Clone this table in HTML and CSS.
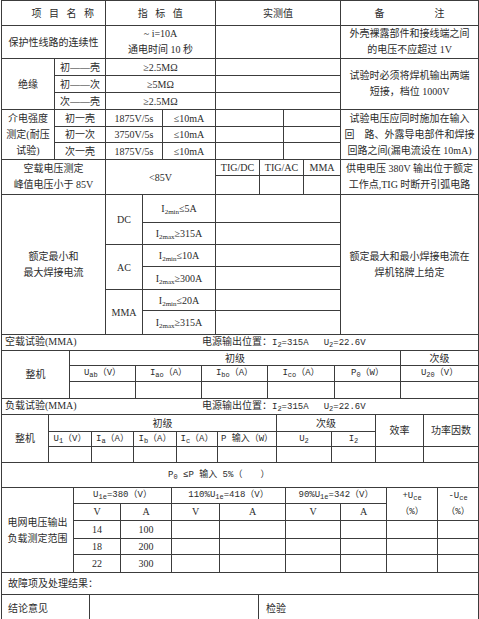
FILE: index.html
```html
<!DOCTYPE html>
<html lang="zh">
<head>
<meta charset="utf-8">
<link rel="stylesheet" href="styles.css">
</head>
<body>
<div class="sheet">

<table class="t">
<colgroup><col class="a1"><col class="a2"><col class="a3"><col class="a4"><col class="a5"><col class="a6"><col class="a7"><col class="a8"><col class="a9"><col class="a10"></colgroup>
<tr class="r25"><td colspan="2" class="sp sp-l">项目名称</td><td colspan="3" class="sp sp-m">指标值</td><td colspan="4">实测值</td><td>备<span class="gap"></span>注</td></tr>
<tr class="r31"><td colspan="2">保护性线路的连续性</td><td colspan="3" class="rm">~ i=10A<br>通电时间 10 秒</td><td colspan="4"></td><td class="rm">外壳裸露部件和接线端之间<br>的电压不应超过 1V</td></tr>
<tr class="r17"><td rowspan="3">绝缘</td><td>初——壳</td><td colspan="3">≥2.5MΩ</td><td colspan="4"></td><td rowspan="3" class="rm">试验时必须将焊机输出两端<br>短接，档位 1000V</td></tr>
<tr class="r17"><td>初——次</td><td colspan="3">≥5MΩ</td><td colspan="4"></td></tr>
<tr class="r17"><td>次——壳</td><td colspan="3">≥2.5MΩ</td><td colspan="4"></td></tr>
<tr class="r17"><td rowspan="3" class="rm">介电强度<br>测定(耐压<br>试验)</td><td>初一壳</td><td colspan="2">1875V/5s</td><td>≤10mA</td><td colspan="2"></td><td colspan="2"></td><td rowspan="3" class="rm">试验电压应同时施加在输入<br>回　路、外露导电部件和焊接<br>回路之间(漏电流设在 10mA)</td></tr>
<tr class="r16"><td>初一次</td><td colspan="2">3750V/5s</td><td>≤10mA</td><td colspan="2"></td><td colspan="2"></td></tr>
<tr class="r17"><td>次一壳</td><td colspan="2">1875V/5s</td><td>≤10mA</td><td colspan="2"></td><td colspan="2"></td></tr>
<tr class="r16"><td colspan="2" rowspan="2" class="rm">空载电压测定<br>峰值电压小于 85V</td><td colspan="3" rowspan="2">&lt;85V</td><td>TIG/DC</td><td colspan="2">TIG/AC</td><td>MMA</td><td rowspan="2" class="rm">供电电压 380V 输出位于额定<br>工作点,TIG 时断开引弧电路</td></tr>
<tr class="r19"><td></td><td colspan="2"></td><td></td></tr>
<tr class="r28"><td colspan="2" rowspan="6" class="rm">额定最小和<br>最大焊接电流</td><td rowspan="2">DC</td><td colspan="2">I<sub>2min</sub>≤5A</td><td colspan="4"></td><td rowspan="6" class="rm">额定最大和最小焊接电流在<br>焊机铭牌上给定</td></tr>
<tr class="r22"><td colspan="2">I<sub>2max</sub>≥315A</td><td colspan="4"></td></tr>
<tr class="r22"><td rowspan="2">AC</td><td colspan="2">I<sub>2min</sub>≤10A</td><td colspan="4"></td></tr>
<tr class="r23"><td colspan="2">I<sub>2max</sub>≥300A</td><td colspan="4"></td></tr>
<tr class="r21"><td rowspan="2">MMA</td><td colspan="2">I<sub>2min</sub>≤20A</td><td colspan="4"></td></tr>
<tr class="r24"><td colspan="2">I<sub>2max</sub>≥315A</td><td colspan="4"></td></tr>
</table>

<table class="t">
<colgroup><col class="b1"><col class="b2"><col class="b3"><col class="b4"><col class="b5"><col class="b6"><col class="b7"></colgroup>
<tr class="r15"><td colspan="7" class="ttl"><span class="ttl-l">空载试验(MMA)</span><span class="ttl-r">电源输出位置：<span class="mono">I<sub>2</sub>=315A</span><span class="mono gap-s">U<sub>2</sub>=22.6V</span></span></td></tr>
<tr class="r15"><td rowspan="3">整机</td><td colspan="5">初级</td><td>次级</td></tr>
<tr class="r16 mono"><td>U<sub>ab</sub>（V）</td><td>I<sub>ao</sub>（A）</td><td>I<sub>bo</sub>（A）</td><td>I<sub>co</sub>（A）</td><td>P<sub>0</sub>（W）</td><td>U<sub>20</sub>（V）</td></tr>
<tr class="r17"><td></td><td></td><td></td><td></td><td></td><td></td></tr>
</table>

<table class="t">
<colgroup><col class="c1"><col class="c2"><col class="c3"><col class="c4"><col class="c5"><col class="c6"><col class="c7"><col class="c8"><col class="c9"><col class="c10"></colgroup>
<tr class="r15"><td colspan="10" class="ttl"><span class="ttl-l">负载试验(MMA)</span><span class="ttl-r">电源输出位置：<span class="mono">I<sub>2</sub>=315A</span><span class="mono gap-s">U<sub>2</sub>=22.6V</span></span></td></tr>
<tr class="r17"><td rowspan="3">整机</td><td colspan="5">初级</td><td colspan="2">次级</td><td rowspan="2">效率</td><td rowspan="2">功率因数</td></tr>
<tr class="r15 mono"><td>U<sub>1</sub>（V）</td><td>I<sub>a</sub>（A）</td><td>I<sub>b</sub>（A）</td><td>I<sub>c</sub>（A）</td><td>P 输入（W）</td><td>U<sub>2</sub></td><td>I<sub>2</sub></td></tr>
<tr class="r16"><td></td><td></td><td></td><td></td><td></td><td></td><td></td><td></td><td></td></tr>
<tr class="r25"><td colspan="10" class="mono pwr">P<sub>0</sub> ≤P 输入 5%（　　）</td></tr>
</table>

<table class="t">
<colgroup><col class="d1"><col class="d2"><col class="d3"><col class="d4"><col class="d5"><col class="d6"><col class="d7"><col class="d8"><col class="d9"></colgroup>
<tr class="r15 mono"><td rowspan="5" class="rm cjk">电网电压输出<br>负载测定范围</td><td colspan="2">U<sub>1e</sub>=380（V）</td><td colspan="2">110%U<sub>1e</sub>=418（V）</td><td colspan="2">90%U<sub>1e</sub>=342（V）</td><td rowspan="2" class="rm">+U<sub>ce</sub><br>（%）</td><td rowspan="2" class="rm">-U<sub>ce</sub><br>（%）</td></tr>
<tr class="r17"><td>V</td><td>A</td><td>V</td><td>A</td><td>V</td><td>A</td></tr>
<tr class="r18"><td>14</td><td>100</td><td></td><td></td><td></td><td></td><td></td><td></td></tr>
<tr class="r16"><td>18</td><td>200</td><td></td><td></td><td></td><td></td><td></td><td></td></tr>
<tr class="r18"><td>22</td><td>300</td><td></td><td></td><td></td><td></td><td></td><td></td></tr>
</table>

<table class="t">
<colgroup><col class="e1"><col class="e2"><col class="e3"></colgroup>
<tr class="r21"><td colspan="3" class="lft">故障项及处理结果：</td></tr>
<tr class="r29"><td class="lft">结论意见</td><td></td><td class="lft lft-w">检验</td></tr>
</table>

</div>
</body>
</html>
```
FILE: styles.css
```css
* { box-sizing: border-box; }
html, body { margin: 0; padding: 0; background: #fff; }
body {
  font-family: "Liberation Serif", "Noto Sans CJK SC", serif;
  font-size: 10px;
  color: #2b2b2b;
}
.sheet {
  width: 477px;
  margin-left: 1px;
  display: flex;
  flex-direction: column;
}
.t {
  border-collapse: collapse;
  table-layout: fixed;
  width: 477px;
}
.t td {
  border: 1px solid #3c3c3c;
  padding: 0;
  text-align: center;
  vertical-align: middle;
  line-height: 13px;
  white-space: nowrap;
  overflow: hidden;
}
.t + .t tr:first-child td { border-top: 0; }

sub { font-size: 7px; vertical-align: -2px; line-height: 0; }

.t td.rm { line-height: 16px; }
.t td.sp { letter-spacing: 7.5px; }
.t td.sp-l { padding-left: 26px; }
.t td.sp-m { padding-left: 7px; }
.gap { display: inline-block; width: 50px; }

.mono { font-family: "Liberation Mono", "Noto Sans CJK SC", monospace; font-size: 9px; }
.t .mono td { font-family: "Liberation Mono", "Noto Sans CJK SC", monospace; font-size: 9px; }
.t .mono td.cjk { font-family: "Noto Sans CJK SC", sans-serif; font-size: 10px; }

.t td.ttl { text-align: left; padding-left: 3px; }
.ttl-l { display: inline-block; width: 197px; }
.gap-s { margin-left: 15px; }
.t td.pwr { text-align: left; padding-left: 166px; }

.t td.lft { text-align: left; padding-left: 6px; }
.t td.lft-w { padding-left: 7px; }

/* row heights */
.r15 { height: 15px; }
.r16 { height: 16px; }
.r17 { height: 17px; }
.r18 { height: 18px; }
.r19 { height: 19px; }
.r21 { height: 21px; }
.r22 { height: 22px; }
.r23 { height: 23px; }
.r24 { height: 24px; }
.r25 { height: 25px; }
.r28 { height: 28px; }
.r29 { height: 29px; }
.r31 { height: 31px; }

/* section A columns */
.a1 { width: 53px; } .a2 { width: 51px; } .a3 { width: 37px; } .a4 { width: 20px; } .a5 { width: 53px; }
.a6 { width: 44px; } .a7 { width: 24px; } .a8 { width: 20px; } .a9 { width: 37px; } .a10 { width: 138px; }
/* section B */
.b1 { width: 68px; } .b2 { width: 66px; } .b3 { width: 66px; } .b4 { width: 66px; } .b5 { width: 67px; } .b6 { width: 66px; } .b7 { width: 78px; }
/* section C */
.c1 { width: 47px; } .c2 { width: 43px; } .c3 { width: 42px; } .c4 { width: 43px; } .c5 { width: 41px; }
.c6 { width: 59px; } .c7 { width: 55px; } .c8 { width: 44px; } .c9 { width: 48px; } .c10 { width: 55px; }
/* section D */
.d1 { width: 72px; } .d2 { width: 47px; } .d3 { width: 51px; } .d4 { width: 48px; } .d5 { width: 66px; }
.d6 { width: 55px; } .d7 { width: 46px; } .d8 { width: 51px; } .d9 { width: 41px; }
/* section E */
.e1 { width: 88px; } .e2 { width: 169px; } .e3 { width: 220px; }
```
